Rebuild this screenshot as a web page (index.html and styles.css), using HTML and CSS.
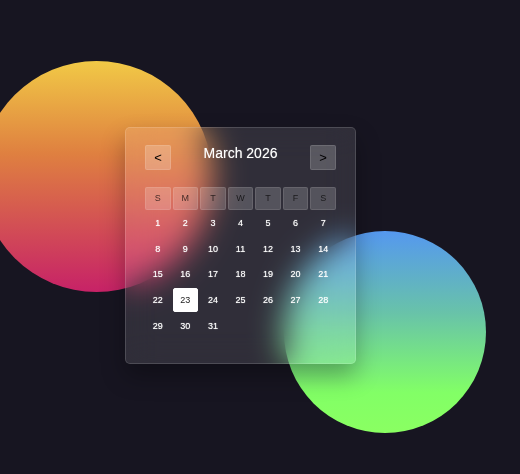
FILE: index.html
```html
<!DOCTYPE html>
<html lang="en">
<head>
<meta charset="utf-8">
<meta name="viewport" content="width=device-width, initial-scale=1">
<title>Calendar</title>
<link rel="stylesheet" href="styles.css">
</head>
<body>
<main class="scene">
  <div class="orb orb-warm"></div>
  <div class="orb orb-cool"></div>
  <section class="calendar">
    <header class="calendar-header">
      <button class="nav" type="button" aria-label="Previous month">&lt;</button>
      <h1 class="month">March 2026</h1>
      <button class="nav" type="button" aria-label="Next month">&gt;</button>
    </header>
    <table class="days">
      <thead>
        <tr><th>S</th><th>M</th><th>T</th><th>W</th><th>T</th><th>F</th><th>S</th></tr>
      </thead>
      <tbody>
        <tr><td>1</td><td>2</td><td>3</td><td>4</td><td>5</td><td>6</td><td>7</td></tr>
        <tr><td>8</td><td>9</td><td>10</td><td>11</td><td>12</td><td>13</td><td>14</td></tr>
        <tr><td>15</td><td>16</td><td>17</td><td>18</td><td>19</td><td>20</td><td>21</td></tr>
        <tr><td>22</td><td class="today">23</td><td>24</td><td>25</td><td>26</td><td>27</td><td>28</td></tr>
        <tr><td>29</td><td>30</td><td>31</td><td></td><td></td><td></td><td></td></tr>
      </tbody>
    </table>
  </section>
</main>
</body>
</html>
```
FILE: styles.css
```css
* {
  box-sizing: border-box;
}

body {
  margin: 0;
  min-height: 100vh;
  padding: 16px 39px 0 0;
  display: flex;
  align-items: center;
  justify-content: center;
  overflow: hidden;
  background: #171521;
  font-family: "Liberation Sans", Arial, sans-serif;
}

.scene {
  position: relative;
  width: 100%;
  max-width: 231px;
}

/* Decorative discs behind the glass card */
.orb {
  position: absolute;
  border-radius: 50%;
}

.orb-warm {
  top: -66px;
  left: -144px;
  width: 231px;
  height: 231px;
  background: linear-gradient(#f1c946, #df8040 40%, #c72267);
}

.orb-cool {
  top: 104px;
  left: 159px;
  width: 202px;
  height: 202px;
  background: linear-gradient(#5598ef, #68c2aa 40%, #82ff66 80%, #8aff62);
}

.calendar {
  position: relative;
  padding: 17px 17px 23px;
  border: 1px solid rgba(255, 255, 255, 0.14);
  border-radius: 5px;
  background: rgba(255, 255, 255, 0.11);
  box-shadow: 0 12px 24px rgba(0, 0, 0, 0.3);
  backdrop-filter: blur(16px);
}

.calendar-header {
  display: flex;
  align-items: flex-start;
  justify-content: space-between;
  margin-bottom: 15px;
  padding: 0 2px;
}

.month {
  margin: 0;
  color: #fff;
  font-size: 14px;
  font-weight: 400;
  line-height: 16px;
  text-shadow: 0 0 1px rgba(255, 255, 255, 0.5);
}

.nav {
  width: 26px;
  height: 25px;
  padding: 0;
  border: 1px solid rgba(255, 255, 255, 0.12);
  border-radius: 2px;
  background: rgba(255, 255, 255, 0.2);
  color: #000;
  font-family: inherit;
  font-size: 13px;
}

.days {
  width: 100%;
  height: 155px;
  table-layout: fixed;
  border-collapse: separate;
  border-spacing: 2px;
  color: #fff;
  font-size: 9px;
  line-height: 12px;
  text-align: center;
}

.days th,
.days td {
  height: 23px;
  padding: 0;
  border: 1px solid transparent;
  border-radius: 2px;
}

.days th {
  border-color: rgba(255, 255, 255, 0.1);
  background: rgba(255, 255, 255, 0.18);
  color: rgba(0, 0, 0, 0.7);
  font-weight: 400;
}

.days td {
  text-shadow: 0 0 1px rgba(255, 255, 255, 0.7);
}

.days .today {
  border-color: #fff;
  background: #fff;
  color: #222;
}
```
